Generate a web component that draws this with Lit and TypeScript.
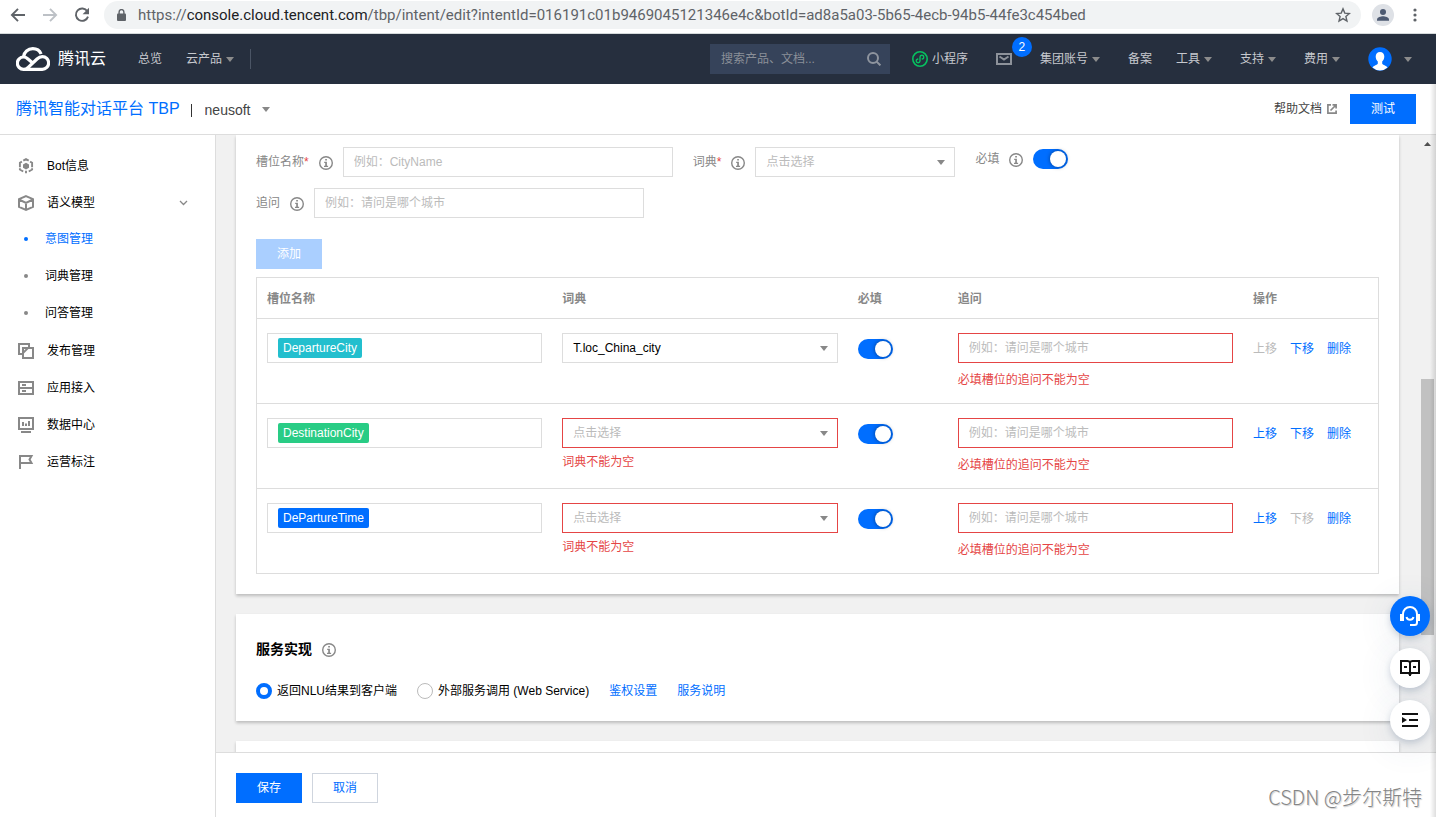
import { LitElement, html, css, svg, nothing } from "lit";
import { customElement, state } from "lit/decorators.js";
import { classMap } from "lit/directives/class-map.js";

interface Slot {
  name: string;
  tone: string;
  dict: string;
}

const caret = html`<svg class="caret" width="8" height="5" viewBox="0 0 8 5" aria-hidden="true"><path d="M0 0h8L4 5z" fill="currentColor"/></svg>`;

const info = html`<svg class="info" width="14" height="14" viewBox="0 0 14 14" aria-hidden="true">
  <circle cx="7" cy="7" r="6.3" fill="none" stroke="currentColor" stroke-width="1.4"/>
  <path d="M6.2 3h1.700v1.500H6.200zM5.200 5.700h2.700v4h1.200v1.200H5V9.700h1.200V6.900h-1z" fill="currentColor"/>
</svg>`;

const sideIcons: Record<string, unknown> = {
  bot: svg`<path d="M5.300 2.700 8 1.200l2.700 1.500M1.900 9.200V4.700l2-1.100M14.100 9.200V4.700l-2-1.100M1.900 10.300v1.200l3.300 2M14.100 10.300v1.200l-3.300 2M8 12.800v2.400" fill="none" stroke="currentColor" stroke-width="1.900"/><path d="M8 4.700 11 6.400v3.400L8 11.500 5 9.800V6.400z" fill="currentColor"/>`,
  cube: svg`<path d="M8 1.100 15 4.200v7.600L8 14.900 1 11.800V4.200zM1 4.500l7 3.500 7-3.500M8 8v6.700" fill="none" stroke="currentColor" stroke-width="2"/>`,
  publish: svg`<path d="M4 11H1V1h10v3" fill="none" stroke="currentColor" stroke-width="2"/><path d="M5 5h10v10H5z" fill="none" stroke="currentColor" stroke-width="2"/><path d="m5 10 5-5" stroke="currentColor" stroke-width="1.800"/>`,
  server: svg`<path d="M1 2h14v12H1zM1 8h14" fill="none" stroke="currentColor" stroke-width="2"/><path d="M4 4h4v2H4zM4 10h4v2H4z" fill="currentColor"/>`,
  data: svg`<path d="M1 1h14v11H1z" fill="none" stroke="currentColor" stroke-width="2"/><path d="M3 14h10v2H3zM4 5h2v4H4zM7 6.500h2V9H7zM10 4h2v5h-2z" fill="currentColor"/>`,
  flag: svg`<path d="M2 15V2h11.500L11.500 5.500 13.500 9H2" fill="none" stroke="currentColor" stroke-width="2"/>`,
};

@customElement("app-root")
export class AppRoot extends LitElement {
  @state() private slots: Slot[] = [
    { name: "DepartureCity", tone: "cyan", dict: "T.loc_China_city" },
    { name: "DestinationCity", tone: "green", dict: "" },
    { name: "DePartureTime", tone: "blue", dict: "" },
  ];

  static styles = css`
    :host {
      display: flex;
      flex-direction: column;
      height: 100vh;
      overflow: hidden;
      position: relative;
      background: #fff;
      color: #000;
      font: 12px/20px "Liberation Sans", "Noto Sans CJK SC", sans-serif;
    }
    * { box-sizing: border-box; }
    a { color: #006eff; text-decoration: none; white-space: nowrap; }
    button, input, select { font: inherit; color: inherit; margin: 0; }
    button { cursor: pointer; }
    svg { flex: none; display: block; }

    .browser {
      display: flex;
      align-items: flex-start;
      flex: none;
      height: 34px;
      padding: 1px 16px 0 10px;
      border-bottom: 1px solid #d5dadb;
      color: #5f6368;
    }
    .tool { display: flex; align-items: center; justify-content: center; width: 16px; height: 28px; padding: 0; border: 0; background: none; margin-right: 16px; }
    .tool.off { color: #bdc1c6; }
    .tool.last { margin-right: 14px; }
    .tool.menu { margin: 0; width: 10px; }
    .address {
      display: flex;
      align-items: center;
      flex: 1;
      min-width: 0;
      height: 28px;
      padding: 0 10px 0 13px;
      border-radius: 14px;
      background: #f1f3f4;
      font: 15px/20px Roboto, sans-serif;
      white-space: nowrap;
    }
    .url { flex: 1; margin-left: 12px; overflow: hidden; }
    .host { color: #202124; }
    .profile { margin: 3px 16px 0 11px; }

    .topnav {
      display: flex;
      align-items: center;
      flex: none;
      height: 50px;
      padding: 0 24px 0 16px;
      background: #262f3e;
      color: #c6c9ce;
      white-space: nowrap;
    }
    .brand { display: flex; align-items: center; gap: 8px; margin-right: 32px; color: #fff; font-size: 16px; }
    .navlink { display: flex; align-items: center; gap: 4px; margin-right: 24px; color: #c6c9ce; }
    .navlink .caret, .me .caret { color: #8c8c8c; }
    .navlink.drop { margin-right: 28px; }
    .rule { width: 1px; height: 20px; background: #4b5565; margin-left: -12px; }
    .search { display: flex; align-items: center; width: 180px; height: 30px; margin: 0 22px 0 auto; padding: 0 9px 0 11px; background: #36435a; color: #8e949e; }
    .search input { flex: 1; min-width: 0; padding: 0; border: 0; background: none; outline: 0; }
    .search input::placeholder { color: #8a8f98; opacity: 1; }
    .mail { position: relative; color: #8d929a; }
    .badge { position: absolute; left: 16px; top: -16px; width: 20px; height: 20px; border-radius: 50%; background: #006eff; color: #fff; text-align: center; }
    .me { display: flex; align-items: center; gap: 12px; }

    .product {
      display: flex;
      align-items: center;
      flex: none;
      height: 51px;
      padding: 0 20px 0 16px;
      border-bottom: 1px solid #ddd;
      white-space: nowrap;
    }
    .product h1 { margin: 0; color: #006eff; font-weight: 400; font-size: 16px; line-height: 24px; }
    .bar { width: 1px; height: 13px; margin: 2px 13px 0 11px; background: #333; }
    .pick { display: grid; align-items: center; color: #888; }
    .pick > * { grid-area: 1 / 1; }
    .pick .caret { justify-self: end; pointer-events: none; }
    .pick select { appearance: none; border: 0; background: none; padding: 0; outline: 0; border-radius: 0; }
    .pick.bot select { padding-right: 19px; margin-top: 2px; color: #444; font-size: 14px; }
    .help { display: flex; align-items: center; gap: 5px; margin: 0 13px 0 auto; color: #444; }
    .help svg { color: #888; }

    .btn { width: 66px; height: 30px; padding: 0; border: 1px solid #006eff; background: #006eff; color: #fff; line-height: 28px; text-align: center; }
    .btn.ghost { border-color: #cfd5de; background: #fff; color: #006eff; }
    .btn:disabled { border-color: #aacfff; background: #aacfff; cursor: default; }

    .body { display: flex; flex: 1; min-height: 0; }
    .side { flex: none; width: 216px; border-right: 1px solid #ddd; padding: 12px 27px 0 18px; }
    .side ul { list-style: none; margin: 0; padding: 0; }
    .side a { display: flex; align-items: center; gap: 13px; height: 37px; color: #000; }
    .side a svg { color: #888; }
    .side a .chev { margin-left: auto; }
    .side .sub a { gap: 17px; padding: 0 0 2px 6px; }
    .side .sub a::before { content: ""; width: 4px; height: 4px; border-radius: 50%; background: #888; }
    .side .sub a.on { color: #006eff; }
    .side .sub a.on::before { background: #006eff; }

    .main { display: flex; flex-direction: column; flex: 1; min-width: 0; }
    .scroll { display: flex; flex: 1; min-height: 0; background: #f1f1f1; }
    .cards { display: flex; flex-direction: column; flex: 1; min-width: 0; gap: 20px; padding: 0 20px; overflow: hidden; }
    .card { flex: none; background: #fff; padding: 20px; box-shadow: 0 2px 3px rgba(0, 0, 0, 0.22); }
    .card.first { padding-top: 12px; }
    .track { display: flex; flex-direction: column; align-items: center; flex: none; width: 17px; padding-top: 7px; color: #505050; }
    .thumb { width: 13px; height: 42%; margin-top: 233px; background: #c1c1c1; }

    .fields { display: flex; gap: 20px; margin-bottom: 11px; color: #888; }
    .field { display: flex; align-items: center; gap: 10px; height: 30px; white-space: nowrap; }
    .field.short { height: 24px; }
    .req { color: #e54545; }
    .info { color: #888; margin-top: 2px; }
    .text { width: 330px; height: 30px; padding: 0 10px; border: 1px solid #ddd; border-radius: 0; background: #fff; outline: 0; color: #000; }
    .text::placeholder { color: #bbb; opacity: 1; }
    .box { height: 30px; border: 1px solid #ddd; background: #fff; }
    .box select { width: 100%; height: 28px; padding: 0 30px 0 10px; color: #000; }
    .box select.empty { color: #bbb; }
    .box .caret { margin-right: 9px; }
    .box.dict { width: 200px; }
    .wide { width: 100%; }
    .bad { border-color: #e54545; }
    .add { display: block; margin: 21px 0 8px; }

    .switch { appearance: none; display: flex; justify-content: flex-end; align-items: center; width: 35px; height: 20px; padding: 2px; border-radius: 10px; background: #006eff; }
    .switch::before { content: ""; width: 16px; height: 16px; border-radius: 50%; background: #fff; box-shadow: 0 0 4px rgba(0, 0, 0, 0.45); }
    .switch:not(:checked) { background: #bbb; justify-content: flex-start; }

    table { width: 100%; border-collapse: separate; border-spacing: 0; table-layout: fixed; border: 1px solid #ddd; border-bottom: 0; }
    th { height: 41px; padding: 1px 10px 0; text-align: left; color: #888; border-bottom: 1px solid #ddd; }
    td { height: 85px; padding: 14px 10px 0; vertical-align: top; border-bottom: 1px solid #ddd; }
    td .switch { margin-top: 6px; }
    .c-need { width: 100px; }
    .c-act { width: 135px; }
    .tagbox { display: flex; align-items: center; height: 30px; padding: 0 10px; border: 1px solid #ddd; }
    .tagbox input { flex: 1; min-width: 0; border: 0; padding: 0; outline: 0; background: none; }
    .tag { height: 20px; padding: 0 5px; border-radius: 2px; color: #fff; }
    .cyan { background: #23bfce; }
    .green { background: #29cc85; }
    .blue { background: #006eff; }
    .err { margin: 4px 0 0; color: #e54545; }
    .err.low { margin-top: 7px; }
    .acts { display: flex; gap: 13px; padding-top: 6px; }
    .acts a.off { color: #bbb; }

    .heading { display: flex; align-items: center; gap: 10px; height: 30px; margin: 0 0 17px; font-size: 14px; }
    .radios { display: flex; align-items: center; gap: 20px; height: 20px; white-space: nowrap; }
    .radio { display: flex; align-items: center; gap: 5px; }
    .radio input { appearance: none; width: 16px; height: 16px; border: 1px solid #bbb; border-radius: 50%; background: #fff; }
    .radio input:checked { border: 4px solid #006eff; }

    .foot { display: flex; gap: 10px; flex: none; height: 65px; padding: 20px 20px 0; border-top: 1px solid #ddd; background: #fff; }

    .edge { position: absolute; top: 84px; right: 0; bottom: 0; width: 6px; background: linear-gradient(to right, rgba(0, 0, 0, 0), rgba(0, 0, 0, 0.13)); pointer-events: none; }
    .float { position: absolute; right: 6px; bottom: 77px; display: flex; flex-direction: column; gap: 12px; }
    .round { display: flex; align-items: center; justify-content: center; width: 40px; height: 40px; padding: 0; border: 0; border-radius: 50%; background: #fff; color: #111; box-shadow: 0 3px 6px rgba(55, 80, 120, 0.22), 0 6px 36px rgba(55, 80, 120, 0.12); }
    .round.lead { background: #006eff; color: #fff; }
    .mark { position: absolute; right: 14px; bottom: 5px; font: 300 20px/30px "Noto Sans CJK SC", sans-serif; color: #858585; text-shadow: -1px -1px 0 #fff, 1px 1px 1px #ccc; white-space: nowrap; pointer-events: none; }
  `;

  private setDict(index: number, e: Event) {
    const dict = (e.target as HTMLSelectElement).value;
    this.slots = this.slots.map((s, i) => (i === index ? { ...s, dict } : s));
  }

  private move(index: number, step: number, e: Event) {
    e.preventDefault();
    const to = index + step;
    if (to < 0 || to >= this.slots.length) return;
    const next = [...this.slots];
    [next[index], next[to]] = [next[to], next[index]];
    this.slots = next;
  }

  private remove(index: number, e: Event) {
    e.preventDefault();
    this.slots = this.slots.filter((_, i) => i !== index);
  }

  private browserBar() {
    return html`<div class="browser">
      <button class="tool" aria-label="Back"><svg width="16" height="16" viewBox="0 0 16 16"><path d="M15 8H2.500M8 1.800 1.900 8 8 14.200" fill="none" stroke="currentColor" stroke-width="1.900"/></svg></button>
      <button class="tool off" aria-label="Forward"><svg width="16" height="16" viewBox="0 0 16 16"><path d="M1 8h12.500M8 1.800 14.100 8 8 14.200" fill="none" stroke="currentColor" stroke-width="1.900"/></svg></button>
      <button class="tool last" aria-label="Reload"><svg width="16" height="16" viewBox="0 0 16 16"><path d="M13.300 4.300A6.200 6.200 0 1 0 14 9.600" fill="none" stroke="currentColor" stroke-width="1.900"/><path d="M15 .8v6.400H8.600z" fill="currentColor"/></svg></button>
      <div class="address">
        <svg width="9" height="12" viewBox="0 0 9 12"><path d="M2.100 5V3a2.400 2.400 0 0 1 4.800 0v2" fill="none" stroke="currentColor" stroke-width="1.400"/><rect y="4.500" width="9" height="7.500" rx="1" fill="currentColor"/></svg>
        <span class="url">https://<span class="host">console.cloud.tencent.com</span>/tbp/intent/edit?intentId=016191c01b9469045121346e4c&amp;botId=ad8a5a03-5b65-4ecb-94b5-44fe3c454bed</span>
        <svg width="16" height="16" viewBox="0 0 16 16"><path d="m8 1.900 1.800 4.200 4.600.4-3.500 3 1.050 4.500L8 11.600 4.050 14l1.050-4.500-3.500-3 4.600-.4z" fill="none" stroke="currentColor" stroke-width="1.400"/></svg>
      </div>
      <svg class="profile" width="22" height="22" viewBox="0 0 22 22"><circle cx="11" cy="11" r="11" fill="#dee1e6"/><circle cx="11" cy="8" r="3" fill="#4d5a72"/><path d="M5 16.800v-1.300c0-2.200 4-3.200 6-3.200s6 1 6 3.200v1.300z" fill="#4d5a72"/></svg>
      <button class="tool menu" aria-label="Menu"><svg width="4" height="14" viewBox="0 0 4 14" fill="currentColor"><circle cx="2" cy="2" r="1.600"/><circle cx="2" cy="7" r="1.600"/><circle cx="2" cy="12" r="1.600"/></svg></button>
    </div>`;
  }

  private topNav() {
    const drop = (label: string) => html`<a class="navlink drop" href="#">${label}${caret}</a>`;
    return html`<nav class="topnav">
      <a class="brand" href="#">
        <svg width="34" height="24" viewBox="0 0 34 24" fill="none" stroke="#fff" stroke-width="3.200"><path d="M7.500 9.800C8 5 12 1.700 16.800 1.700c4 0 7 2.200 8.300 5.300"/><path d="M17 16.200 11.700 11.800C10.500 10.700 9.200 10 7.500 10a6.100 6.100 0 0 0 0 12.300c2 0 3.200-.6 4.700-2L21 12c1.500-1.400 3-2.400 5.300-2.400a6.300 6.300 0 0 1 0 12.700H9"/></svg>
        腾讯云
      </a>
      <a class="navlink" href="#">总览</a>
      ${drop("云产品")}
      <span class="rule"></span>
      <label class="search"><input type="text" aria-label="搜索" placeholder="搜索产品、文档..." />
        <svg width="14" height="14" viewBox="0 0 14 14" fill="none" stroke="currentColor" stroke-width="2"><circle cx="6" cy="6" r="5"/><path d="m9.600 9.600 3.800 3.800"/></svg>
      </label>
      <a class="navlink drop" href="#"><svg width="16" height="16" viewBox="0 0 16 16" fill="none" stroke="#07c160"><circle cx="8" cy="8" r="7.200" stroke-width="1.600"/><path d="M5.800 8a1.900 1.900 0 1 0 2.200 2V6a1.900 1.900 0 1 1 2.200 2" stroke-width="1.400" stroke-linecap="round"/></svg>小程序</a>
      <a class="navlink drop mail" href="#" aria-label="消息"><svg width="16" height="12" viewBox="0 0 16 12" fill="none" stroke="currentColor" stroke-width="2"><path d="M1 1h14v10H1zM3.500 3.500 8 6.500l4.500-3"/></svg><span class="badge">2</span></a>
      ${drop("集团账号")}
      <a class="navlink" href="#">备案</a>
      ${["工具", "支持", "费用"].map(drop)}
      <a class="me" href="#" aria-label="账号"><svg width="24" height="24" viewBox="0 0 24 24"><circle cx="12" cy="12" r="11.700" fill="#006eff"/><path d="M12 5c2.700 0 4.300 1.900 4.300 4.600 0 2.100-.9 4-2.100 5v2c0 1.200 3.200 1.500 5.300 3.900A11.500 11.500 0 0 1 12 23.500a11.500 11.500 0 0 1-7.500-3c2.100-2.400 5.300-2.700 5.300-3.900v-2c-1.200-1-2.100-2.900-2.100-5C7.700 6.900 9.300 5 12 5z" fill="#fff"/></svg>${caret}</a>
    </nav>`;
  }

  private side() {
    const item = (icon: string, label: string, open = false) => html`<li><a href="#">
      <svg width="16" height="16" viewBox="0 0 16 16">${sideIcons[icon]}</svg>${label}
      ${open ? html`<svg class="chev" width="9" height="6" viewBox="0 0 9 6"><path d="m1 1 3.500 3.500L8 1" fill="none" stroke="currentColor" stroke-width="1.300"/></svg>` : nothing}
    </a></li>`;
    return html`<nav class="side"><ul>
      ${item("bot", "Bot信息")}
      ${item("cube", "语义模型", true)}
      <li><ul class="sub">
        ${["意图管理", "词典管理", "问答管理"].map((t, i) => html`<li><a href="#" class=${classMap({ on: i === 0 })}>${t}</a></li>`)}
      </ul></li>
      ${item("publish", "发布管理")}
      ${item("server", "应用接入")}
      ${item("data", "数据中心")}
      ${item("flag", "运营标注")}
    </ul></nav>`;
  }

  private row(s: Slot, i: number) {
    const last = this.slots.length - 1;
    return html`<tr>
      <td><div class="tagbox"><span class="tag ${s.tone}">${s.name}</span><input type="text" aria-label="槽位名称" /></div></td>
      <td>
        <div class=${classMap({ pick: true, box: true, bad: !s.dict })}>
          <select aria-label="词典" class=${classMap({ empty: !s.dict })} @change=${(e: Event) => this.setDict(i, e)}>
            <option value="" ?selected=${!s.dict}>点击选择</option>
            <option value="T.loc_China_city" ?selected=${!!s.dict}>T.loc_China_city</option>
          </select>${caret}
        </div>
        ${s.dict ? nothing : html`<p class="err">词典不能为空</p>`}
      </td>
      <td><input class="switch" type="checkbox" role="switch" aria-label="必填" checked /></td>
      <td>
        <input class="text wide bad" type="text" aria-label="追问" placeholder="例如：请问是哪个城市" />
        <p class="err low">必填槽位的追问不能为空</p>
      </td>
      <td><div class="acts">
        <a href="#" class=${classMap({ off: i === 0 })} @click=${(e: Event) => this.move(i, -1, e)}>上移</a>
        <a href="#" class=${classMap({ off: i === last })} @click=${(e: Event) => this.move(i, 1, e)}>下移</a>
        <a href="#" @click=${(e: Event) => this.remove(i, e)}>删除</a>
      </div></td>
    </tr>`;
  }

  render() {
    return html`
      ${this.browserBar()}
      ${this.topNav()}
      <header class="product">
        <h1>腾讯智能对话平台 TBP</h1>
        <span class="bar"></span>
        <div class="pick bot"><select aria-label="Bot"><option>neusoft</option></select>${caret}</div>
        <a class="help" href="#">帮助文档<svg width="10" height="10" viewBox="0 0 10 10" fill="none" stroke="currentColor" stroke-width="1.700"><path d="M4 .9H.9v8.200h8.200V6.500M3.500 6.500 8.500 1.500M5.500.9h3.600v3.600"/></svg></a>
        <button class="btn">测试</button>
      </header>
      <div class="body">
        ${this.side()}
        <main class="main">
          <div class="scroll">
            <div class="cards">
              <section class="card first">
                <div class="fields">
                  <div class="field"><label for="slot">槽位名称<span class="req">*</span></label>${info}<input id="slot" class="text" type="text" placeholder="例如：CityName" /></div>
                  <div class="field"><label for="dict">词典<span class="req">*</span></label>${info}
                    <div class="pick box dict"><select id="dict" class="empty"><option>点击选择</option></select>${caret}</div></div>
                  <div class="field short"><label for="need">必填</label>${info}<input id="need" class="switch" type="checkbox" role="switch" checked /></div>
                </div>
                <div class="fields">
                  <div class="field"><label for="ask">追问</label>${info}<input id="ask" class="text" type="text" placeholder="例如：请问是哪个城市" /></div>
                </div>
                <button class="btn add" disabled>添加</button>
                <table>
                  <colgroup><col /><col /><col class="c-need" /><col /><col class="c-act" /></colgroup>
                  <thead><tr><th>槽位名称</th><th>词典</th><th>必填</th><th>追问</th><th>操作</th></tr></thead>
                  <tbody>${this.slots.map((s, i) => this.row(s, i))}</tbody>
                </table>
              </section>
              <section class="card">
                <h2 class="heading">服务实现${info}</h2>
                <div class="radios">
                  <label class="radio"><input type="radio" name="svc" checked />返回NLU结果到客户端</label>
                  <label class="radio"><input type="radio" name="svc" />外部服务调用 (Web Service)</label>
                  <a href="#">鉴权设置</a>
                  <a href="#">服务说明</a>
                </div>
              </section>
              <section class="card"></section>
            </div>
            <div class="track"><svg width="7" height="4" viewBox="0 0 7 4"><path d="M3.500 0 7 4H0z" fill="currentColor"/></svg><div class="thumb"></div></div>
          </div>
          <footer class="foot"><button class="btn">保存</button><button class="btn ghost">取消</button></footer>
        </main>
      </div>
      <div class="edge"></div>
      <div class="float">
        <button class="round lead" aria-label="客服"><svg width="20" height="20" viewBox="0 0 20 20" fill="none" stroke="currentColor" stroke-width="2"><path d="M3 9V8a7 7 0 0 1 14 0v8.500a2.500 2.500 0 0 1-2.500 2.500H10"/><path d="M0 8h4v7H0zM16 8h4v7h-4z" fill="currentColor" stroke="none"/><path d="M6.500 11a3.600 3.600 0 0 0 7 0" stroke-width="2"/></svg></button>
        <button class="round" aria-label="文档"><svg width="20" height="18" viewBox="0 0 20 18" fill="none" stroke="currentColor" stroke-width="2"><path d="M10 3.500C9.500 2.300 8.500 2 7.500 2H1v12h7.500L10 15.500 11.500 14H19V2h-6.500c-1 0-2 .3-2.500 1.500zM10 3v14M4 8h3M13 8h3"/></svg></button>
        <button class="round" aria-label="收起"><svg width="16" height="14" viewBox="0 0 16 14" fill="currentColor"><path d="M0 0h16v2H0zM7 6h9v2H7zM0 12h16v2H0zM0 4l5 3-5 3z"/></svg></button>
      </div>
      <div class="mark">CSDN @步尔斯特</div>
    `;
  }
}
